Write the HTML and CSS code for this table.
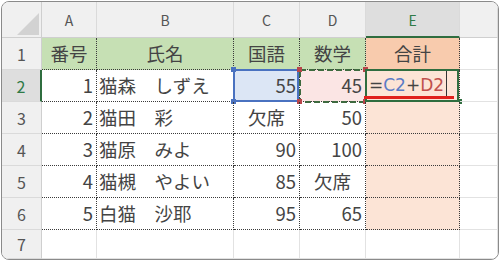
FILE: index.html
```html
<!DOCTYPE html>
<html lang="ja">
<head>
<meta charset="utf-8">
<link rel="stylesheet" href="styles.css">
</head>
<body>
<div class="sheet">
  <div class="grid">
    <div class="ch corner"><svg class="tri" width="40" height="36" viewBox="0 0 40 36"><polygon points="15,33 37,33 37,11" fill="#d2d2d2"/></svg></div>
    <div class="ch">A</div>
    <div class="ch">B</div>
    <div class="ch">C</div>
    <div class="ch">D</div>
    <div class="ch ch-sel">E</div>
    <div class="ch"></div>

    <div class="rh">1</div>
    <div class="c t g ctr">番号</div>
    <div class="c t g ctr">氏名</div>
    <div class="c t g ctr">国語</div>
    <div class="c t g ctr">数学</div>
    <div class="c t o ctr">合計</div>
    <div class="c"></div>

    <div class="rh rh-sel">2</div>
    <div class="c t num">1</div>
    <div class="c t">猫森　しずえ</div>
    <div class="c t num ref-c">55<span class="box-blue"></span><span class="sq sq-b tl"></span><span class="sq sq-b bl"></span></div>
    <div class="c t num ref-d">45<svg class="ants" width="68" height="34" viewBox="0 0 68 34"><rect x="1" y="1" width="66" height="32" fill="none" stroke="#3e6a3f" stroke-width="2" stroke-dasharray="6 3"/></svg><span class="sq sq-r tl"></span><span class="sq sq-r bl"></span><span class="sq sq-r tr"></span><span class="sq sq-r br"></span></div>
    <div class="c t lo active"><span class="formula">=<span class="fc">C2</span>+<span class="fd">D2</span></span><span class="caret"></span><span class="act-box"></span><span class="underline"></span><span class="sq sq-g br"></span></div>
    <div class="c"></div>

    <div class="rh">3</div>
    <div class="c t num">2</div>
    <div class="c t">猫田　彩</div>
    <div class="c t ctr">欠席</div>
    <div class="c t num">50</div>
    <div class="c t lo"></div>
    <div class="c"></div>

    <div class="rh">4</div>
    <div class="c t num">3</div>
    <div class="c t">猫原　みよ</div>
    <div class="c t num">90</div>
    <div class="c t num">100</div>
    <div class="c t lo"></div>
    <div class="c"></div>

    <div class="rh">5</div>
    <div class="c t num">4</div>
    <div class="c t">猫槻　やよい</div>
    <div class="c t num">85</div>
    <div class="c t ctr">欠席</div>
    <div class="c t lo"></div>
    <div class="c"></div>

    <div class="rh">6</div>
    <div class="c t num">5</div>
    <div class="c t">白猫　沙耶</div>
    <div class="c t num">95</div>
    <div class="c t num">65</div>
    <div class="c t lo"></div>
    <div class="c"></div>

    <div class="rh">7</div>
    <div class="c"></div>
    <div class="c"></div>
    <div class="c"></div>
    <div class="c"></div>
    <div class="c"></div>
    <div class="c"></div>
  </div>
</div>
</body>
</html>
```
FILE: styles.css
```css
html, body {
  margin: 0;
  padding: 0;
  background: #ffffff;
}
.sheet {
  margin: 1px;
  width: 498px;
  height: 259px;
  box-sizing: border-box;
  border: 1px solid #8a8a8a;
  border-radius: 8px;
  overflow: hidden;
  background: #ffffff;
  font-family: "Noto Sans CJK JP", "Noto Sans", sans-serif;
  color: #444444;
}
.grid {
  display: grid;
  grid-template-columns: 40px 55px 137px 66px 66px 94px 1fr;
  grid-template-rows: 36px repeat(6, 32px) 1fr;
  height: 100%;
}
.grid > div {
  box-sizing: border-box;
  position: relative;
  display: flex;
  align-items: center;
  white-space: nowrap;
}
.ch {
  background: #f0f0f0;
  border-right: 1px solid #dadada;
  border-bottom: 1px solid #cfcfcf;
  justify-content: center;
  font-size: 14px;
  color: #555555;
  padding-top: 1px;
}
.corner {
  border-right: 1px solid #cfcfcf;
}
.tri {
  position: absolute;
  left: 0;
  top: 0;
}
.ch-sel {
  background: #dedede;
  color: #2f7a47;
  border-bottom: 2px solid #2f6d3f;
}
.rh {
  background: #f0f0f0;
  border-right: 1px solid #cfcfcf;
  border-bottom: 1px solid #dadada;
  justify-content: center;
  font-size: 16px;
  color: #555555;
}
.rh-sel {
  background: #dedede;
  color: #2f7a47;
  border-right: 2px solid #2f6d3f;
}
.c {
  border-right: 1px solid #e2e2e2;
  border-bottom: 1px solid #e2e2e2;
  font-size: 18.5px;
  line-height: 1;
  padding: 0 2px 1px 2px;
}
.c.t {
  border-right: 1px dotted #3a3a3a;
  border-bottom: 1px dotted #3a3a3a;
}
.g { background: #c6e0b4; }
.o { background: #f8cbad; }
.lo { background: #fce4d6; }
.ctr { justify-content: center; }
.num { justify-content: flex-end; padding-right: 3px; }
.ref-c { background: #dce6f5; }
.ref-d { background: #fbe5e4; }
.box-blue {
  position: absolute;
  left: -1px;
  top: -1px;
  right: 0;
  bottom: -1px;
  border: 2px solid #4a72c0;
}
.ants {
  position: absolute;
  left: -1px;
  top: -1px;
}
.sq {
  position: absolute;
  width: 5px;
  height: 5px;
}
.sq-b { background: #4a72c0; }
.sq-r { background: #b8454a; }
.sq-g { background: #2f6d3f; }
.tl { left: -3px; top: -3px; }
.bl { left: -3px; bottom: -3px; }
.tr { right: -3px; top: -3px; }
.br { right: -3px; bottom: -3px; }
.active { padding-left: 3px; }
.formula {
  font-family: "DejaVu Sans", "Noto Sans", sans-serif;
  font-size: 17px;
  letter-spacing: 0;
}
.fc { color: #5b7cc6; }
.fd { color: #c0504d; }
.caret {
  position: absolute;
  left: 80px;
  top: 1px;
  width: 1px;
  height: 28px;
  background: #333333;
}
.act-box {
  position: absolute;
  left: -1px;
  top: -1px;
  right: 0;
  bottom: -1px;
  border: 2px solid #2f6d3f;
}
.underline {
  position: absolute;
  left: -2px;
  top: 26px;
  width: 90px;
  height: 3px;
  background: #e0201b;
}
```
